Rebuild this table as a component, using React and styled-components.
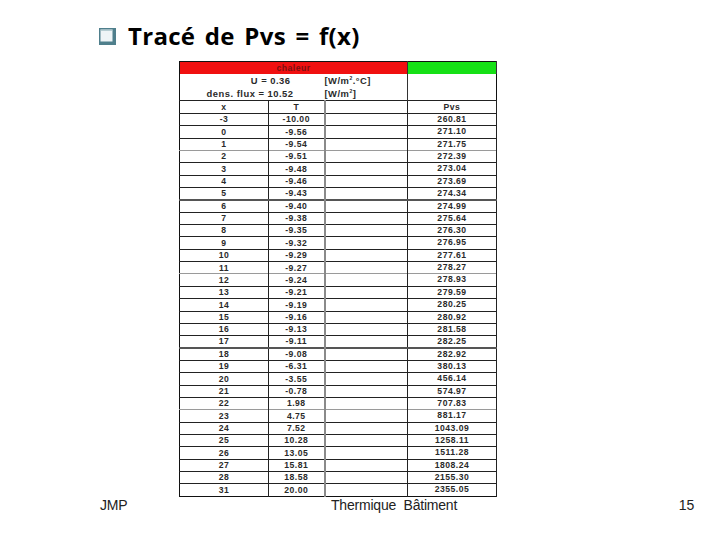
import styled, { createGlobalStyle } from 'styled-components';

const GlobalStyle = createGlobalStyle`
	html, body {
		margin: 0;
		padding: 0;
		background: #fff;
	}
	body {
		font-family: 'Liberation Sans', Arial, sans-serif;
	}
`;

const Slide = styled.div`
	width: 720px;
	height: 540px;
	display: flex;
	flex-direction: column;
	overflow: hidden;
	background: #fff;
`;

const TitleRow = styled.div`
	display: flex;
	align-items: flex-start;
	gap: 12px;
	padding: 20px 0 0 99px;
	box-sizing: border-box;
	height: 61px;
`;

const TitleText = styled.h1`
	margin: -1px 0 0;
	font-family: 'Open Sans', 'DejaVu Sans', sans-serif;
	font-weight: 700;
	font-size: 24px;
	letter-spacing: 0.3px;
	word-spacing: 3px;
	color: #000;
`;

const BulletBox = styled.div`
	padding-top: 8px;
	line-height: 0;
`;

const TableWrap = styled.div`
	padding-left: 179px;
`;

const Grid = styled.table`
	border-collapse: collapse;
	table-layout: fixed;
	width: 317px;
	border: 1px solid #111;
	font-weight: 700;
	font-size: 8.6px;
	letter-spacing: 0.5px;
	line-height: 1;
	color: #2a2a2a;
	td {
		padding: 0;
		white-space: nowrap;
	}
`;

const Band = styled.td`
	height: 12px;
	background: ${(p) => p.$color};
	color: #7a1010;
	text-align: center;
	border-right: 1px solid #333;
`;

const InfoCell = styled.td`
	height: ${(p) => p.$h}px;
	text-align: ${(p) => p.$align || 'left'};
	padding-right: ${(p) => p.$pr || 0}px !important;
	font-size: 9.4px;
	border-right: ${(p) => (p.$line ? '1px solid #333' : 'none')};
`;

const Row = styled.tr`
	height: ${(p) => p.$h || 12.35}px;
	border-top: ${(p) => p.$top};
`;

const Cell = styled.td`
	text-align: center;
	vertical-align: ${(p) => (p.$up ? 'top' : 'middle')};
	padding-top: ${(p) => (p.$up ? '1px' : '0')} !important;
	border-right: ${(p) => p.$right || '1px solid #222'};
`;

const Footer = styled.div`
	display: grid;
	grid-template-columns: 231px 1fr auto;
	align-items: start;
	padding: 0 26px 0 100px;
	height: 24px;
	font-family: 'Liberation Sans', Arial, sans-serif;
	font-size: 14px;
	letter-spacing: -0.2px;
	color: #222;
`;

const Bullet = () => (
	<svg width="17" height="17" viewBox="0 0 17 17">
		<rect x="0" y="0" width="17" height="17" fill="#4f7f8c" />
		<rect x="1.5" y="1.5" width="12" height="12" fill="#eef4f6" />
		<rect x="1.5" y="1.5" width="12" height="1.2" fill="#9fbcc4" />
	</svg>
);

const rows = [
	['-3', '-10.00', '260.81'],
	['0', '-9.56', '271.10'],
	['1', '-9.54', '271.75'],
	['2', '-9.51', '272.39'],
	['3', '-9.48', '273.04'],
	['4', '-9.46', '273.69'],
	['5', '-9.43', '274.34'],
	['6', '-9.40', '274.99'],
	['7', '-9.38', '275.64'],
	['8', '-9.35', '276.30'],
	['9', '-9.32', '276.95'],
	['10', '-9.29', '277.61'],
	['11', '-9.27', '278.27'],
	['12', '-9.24', '278.93'],
	['13', '-9.21', '279.59'],
	['14', '-9.19', '280.25'],
	['15', '-9.16', '280.92'],
	['16', '-9.13', '281.58'],
	['17', '-9.11', '282.25'],
	['18', '-9.08', '282.92'],
	['19', '-6.31', '380.13'],
	['20', '-3.55', '456.14'],
	['21', '-0.78', '574.97'],
	['22', '1.98', '707.83'],
	['23', '4.75', '881.17'],
	['24', '7.52', '1043.09'],
	['25', '10.28', '1258.11'],
	['26', '13.05', '1511.28'],
	['27', '15.81', '1808.24'],
	['28', '18.58', '2155.30'],
	['31', '20.00', '2355.05'],
];

// scanned sheet: some separators are grey, two are heavier
const lineFor = (i) => {
	if (i === 7 || i === 19) return '2px solid #555';
	if (i === 13 || i === 24 || i === 3) return '1px solid #9a9a9a';
	return '1px solid #222';
};

export default function App() {
	return (
		<Slide>
			<GlobalStyle />
			<TitleRow>
				<BulletBox>
					<Bullet />
				</BulletBox>
				<TitleText>Tracé de Pvs = f(x)</TitleText>
			</TitleRow>
			<TableWrap>
				<Grid>
					<colgroup>
						<col style={{ width: 89 }} />
						<col style={{ width: 56 }} />
						<col style={{ width: 83 }} />
						<col style={{ width: 89 }} />
					</colgroup>
					<tbody>
						<tr>
							<Band colSpan={3} $color='#f01010'>chaleur</Band>
							<Band $color='#16e016' />
						</tr>
						<tr>
							<InfoCell colSpan={2} $h={14} $align='right' $pr={34}>U = 0.36</InfoCell>
							<InfoCell $h={14} $line>[W/m<sup style={{ fontSize: 5 }}>2</sup>.°C]</InfoCell>
							<InfoCell $h={14} />
						</tr>
						<tr>
							<InfoCell colSpan={2} $h={12} $align='right' $pr={31}>dens. flux = 10.52</InfoCell>
							<InfoCell $h={12} $line>[W/m<sup style={{ fontSize: 5 }}>2</sup>]</InfoCell>
							<InfoCell $h={12} />
						</tr>
						<Row $h={13} $top='1px solid #222'>
							<Cell>x</Cell>
							<Cell $right='2px solid #8a8a8a'>T</Cell>
							<Cell />
							<Cell>Pvs</Cell>
						</Row>
						{rows.map(([x, t, p], i) => (
							<Row key={x} $top={lineFor(i)}>
								<Cell>{x}</Cell>
								<Cell $right='2px solid #8a8a8a'>{t}</Cell>
								<Cell />
								<Cell $up>{p}</Cell>
							</Row>
						))}
					</tbody>
				</Grid>
			</TableWrap>
			<Footer>
				<span>JMP</span>
				<span>Thermique&nbsp; Bâtiment</span>
				<span>15</span>
			</Footer>
		</Slide>
	);
}
